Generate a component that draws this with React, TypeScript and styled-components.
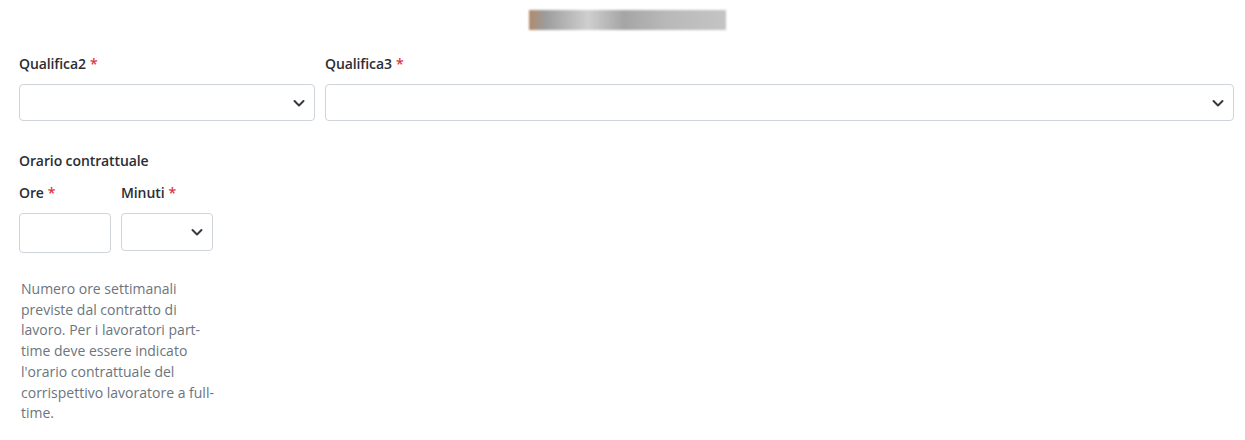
import React from 'react';
import styled, { createGlobalStyle } from 'styled-components';

const GlobalStyle = createGlobalStyle`
    body {
        margin: 0;
        background: #ffffff;
        font-family: "Open Sans", "Liberation Sans", sans-serif;
        color: #212529;
    }
`;

const Page = styled.div`
    padding: 10px 11px 0 19px;
`;

const Heading = styled.div`
    display: flex;
    justify-content: center;
    padding-left: 2px;
`;

// titolo oscurato nello screenshot
const BlurredTitle = styled.div`
    width: 197px;
    height: 20px;
    background: linear-gradient(90deg, #b08a6a 0%, #9c9c9c 8%, #cfcfcf 30%, #a5a5a5 48%, #b9b9b9 70%, #c4c4c4 100%);
    filter: blur(1px);
`;

const Row = styled.div<{ $cols: string }>`
    display: grid;
    grid-template-columns: ${p => p.$cols};
    column-gap: 10px;
    margin-top: 23px;
`;

const Field = styled.div`
    display: flex;
    flex-direction: column;
`;

const Label = styled.label`
    font-size: 14px;
    font-weight: 600;
    line-height: 21px;
    margin-bottom: 10px;
    color: #2a2e33;
    letter-spacing: -0.1px;
`;

const Required = styled.span`
    color: #dc3545;
    margin-left: 4px;
`;

const SelectBox = styled.div<{ $h: number }>`
    position: relative;
    height: ${p => p.$h}px;
    border: 1px solid #ced4da;
    border-radius: 4px;
    box-sizing: border-box;
    background: #fff;
`;

const Chevron = styled.svg`
    position: absolute;
    right: 7px;
    top: 50%;
    transform: translateY(-50%);
`;

const TextInput = styled.input`
    height: 40px;
    width: 100%;
    border: 1px solid #ced4da;
    border-radius: 4px;
    box-sizing: border-box;
    font: inherit;
`;

const Section = styled.div`
    margin-top: 29px;
`;

const SectionTitle = styled.div`
    font-size: 14px;
    font-weight: 600;
    line-height: 21px;
    color: #2a2e33;
    letter-spacing: -0.1px;
`;

const HoursRow = styled.div`
    display: grid;
    grid-template-columns: 92px 92px;
    column-gap: 10px;
    align-items: start;
    margin-top: 11px;
`;

const Help = styled.p`
    width: 196px;
    margin: 26px 0 0 2px;
    font-size: 14px;
    line-height: 20.7px;
    color: #6c757d;
`;

const Select = ({ h = 37 }: { h?: number }) => (
    <SelectBox $h={h}>
        <Chevron width="16" height="16" viewBox="0 0 16 16">
            <path d="M3.5 6 8 10.5 12.5 6" fill="none" stroke="#343a40" strokeWidth="2" strokeLinecap="round" strokeLinejoin="round" />
        </Chevron>
    </SelectBox>
);

const App = () => {
    return (
        <>
            <GlobalStyle />
            <Page>
                <Heading>
                    <BlurredTitle />
                </Heading>

                <Row $cols="296px 1fr">
                    <Field>
                        <Label>Qualifica2<Required>*</Required></Label>
                        <Select />
                    </Field>
                    <Field>
                        <Label>Qualifica3<Required>*</Required></Label>
                        <Select />
                    </Field>
                </Row>

                <Section>
                    <SectionTitle>Orario contrattuale</SectionTitle>
                    <HoursRow>
                        <Field>
                            <Label>Ore<Required>*</Required></Label>
                            <TextInput />
                        </Field>
                        <Field>
                            <Label>Minuti<Required>*</Required></Label>
                            <Select h={38} />
                        </Field>
                    </HoursRow>
                    <Help>
                        Numero ore settimanali previste dal contratto di lavoro. Per i lavoratori part-time deve essere indicato l'orario contrattuale del corrispettivo lavoratore a full-time.
                    </Help>
                </Section>
            </Page>
        </>
    );
};

export default App;
